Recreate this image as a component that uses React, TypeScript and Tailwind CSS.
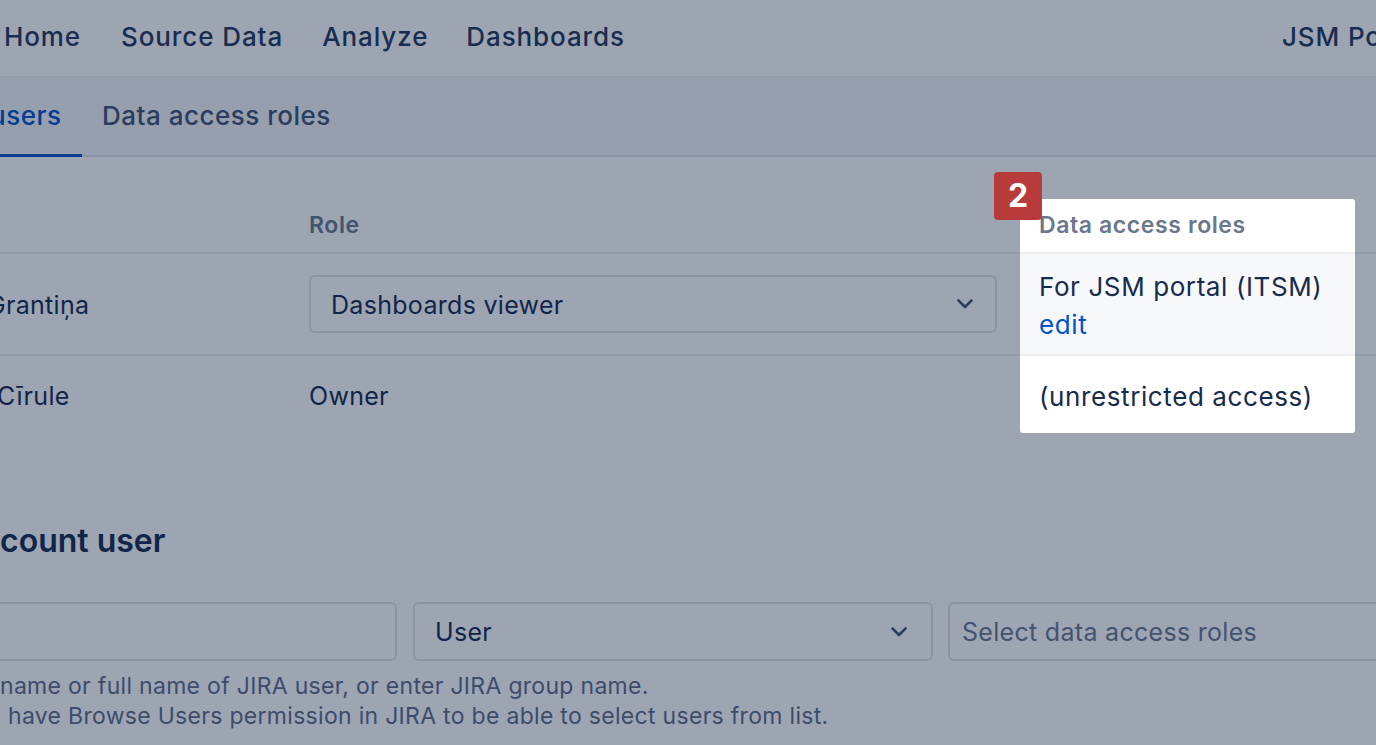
import { useState } from 'react';

interface Member {
  lastName: string;
  shift: string;
  role: string;
  editable: boolean;
  access: string;
  canEdit: boolean;
}

const Chevron = () => (
  <svg width="16" height="10" viewBox="0 0 16 10" fill="none">
    <polyline
      points="1.5,1.5 8,8 14.5,1.5"
      stroke="#42526e"
      strokeWidth="2.5"
      strokeLinecap="round"
      strokeLinejoin="round"
    />
  </svg>
);

const AccountUsersPage = () => {
  const [members] = useState<Member[]>([
    {
      lastName: 'Grantiņa',
      shift: '-ml-[13px]',
      role: 'Dashboards viewer',
      editable: true,
      access: 'For JSM portal (ITSM)',
      canEdit: true,
    },
    {
      lastName: 'Cīrule',
      shift: '-ml-[3px]',
      role: 'Owner',
      editable: false,
      access: '(unrestricted access)',
      canEdit: false,
    },
  ]);

  return (
    <div className="relative h-screen w-full overflow-hidden bg-white font-['Inter','Noto_Sans',sans-serif] text-[#172b4d] whitespace-nowrap">
      {/* top navigation */}
      <nav className="flex h-[76px] items-center pb-[4px] text-[26px] font-medium tracking-[0.9px] text-[#253858]">
        <span className="ml-[4px]">Home</span>
        <span className="ml-[40px]">Source Data</span>
        <span className="ml-[39px]">Analyze</span>
        <span className="ml-[38px]">Dashboards</span>
        <span className="ml-[657px] shrink-0">JSM Portal</span>
      </nav>

      {/* settings tabs */}
      <div className="flex h-[81px] items-stretch border-b-2 border-[#dfe1e6] bg-[#f4f5f7] text-[26px] font-medium tracking-[0.5px]">
        <div className="-mb-[2px] flex w-[82px] shrink-0 items-center border-b-[3px] border-[#0052cc] text-[#0052cc]">
          <span className="-ml-[10px]">users</span>
        </div>
        <div className="ml-[20px] flex items-center text-[#42526e]">Data access roles</div>
      </div>

      {/* members table */}
      <div className="mt-[42px]">
        <div className="flex h-[55px] text-[23px] font-semibold tracking-[0.6px] text-[#6b778c]">
          <div className="w-[289px] shrink-0 border-b-2 border-[#ebecf0]" />
          <div className="flex w-[731px] shrink-0 items-center border-b-2 border-[#ebecf0] pl-[20px]">Role</div>
          <div className="relative z-20 flex w-[335px] shrink-0 items-center rounded-t-[3px] border-b-2 border-[#ebecf0] bg-white px-[19px]">
            Data access roles
            <div className="absolute -left-[26px] -top-[27px] flex h-12 w-12 items-center justify-center rounded-[4px] bg-[#b93a3b] text-[32px] font-bold tracking-normal text-white">
              2
            </div>
          </div>
          <div className="flex-1 border-b-2 border-[#ebecf0]" />
        </div>

        {members.map((m, i) => {
          const last = i === members.length - 1;
          const line = last ? '' : 'border-b-2 border-[#ebecf0]';
          return (
            <div key={m.lastName} className={`flex text-[25px] tracking-[0.3px] ${last ? 'h-[77px]' : 'h-[102px]'}`}>
              <div className={`flex w-[289px] shrink-0 items-center pt-[4px] ${line}`}>
                <span className={m.shift}>{m.lastName}</span>
              </div>
              <div
                className={`flex w-[731px] shrink-0 items-center pl-[20px] pr-[23px] ${m.editable ? '' : 'pt-[4px]'} ${line}`}
              >
                {m.editable ? (
                  <div className="flex h-[58px] w-full items-center justify-between rounded-[6px] border-2 border-[#dfe1e6] pl-[20px] pr-[22px]">
                    <span className="pt-[3px]">{m.role}</span>
                    <Chevron />
                  </div>
                ) : (
                  <span>{m.role}</span>
                )}
              </div>
              <div
                className={`relative z-20 flex w-[335px] shrink-0 flex-col justify-center px-[19px] pt-[4px] text-[26px] tracking-[0.6px] ${line} ${
                  m.canEdit ? 'bg-[#f7f8fa] leading-[38px]' : 'rounded-b-[3px] bg-white'
                }`}
              >
                <span>{m.access}</span>
                {m.canEdit && <span className="text-[#0052cc]">edit</span>}
              </div>
              <div className={`flex-1 ${line}`} />
            </div>
          );
        })}
      </div>

      {/* add user form */}
      <h2 className="mt-[87px] h-[42px] text-[32px] font-semibold leading-[42px]">count user</h2>

      <div className="mt-[40px] flex h-[59px] text-[25px] tracking-[0.3px]">
        <div className="-ml-[23px] w-[420px] shrink-0 rounded-[6px] border-2 border-[#dfe1e6]" />
        <div className="ml-[16px] flex w-[520px] shrink-0 items-center justify-between rounded-[6px] border-2 border-[#dfe1e6] pl-[20px] pr-[24px]">
          <span className="pt-[3px]">User</span>
          <Chevron />
        </div>
        <div className="ml-[15px] flex w-[500px] shrink-0 items-center rounded-[6px] border-2 border-[#dfe1e6] pl-[12px] pt-[3px] text-[#6b778c]">
          Select data access roles
        </div>
      </div>

      <div className="mt-[10px] text-[23px] leading-[30px] tracking-[0.3px] text-[#5e6c84]">
        <p>name or full name of JIRA user, or enter JIRA group name.</p>
        <p className="pl-[8px]">have Browse Users permission in JIRA to be able to select users from list.</p>
      </div>

      {/* dimmed backdrop, highlighted column sits above it */}
      <div className="pointer-events-none absolute inset-0 z-10 bg-[#091e42]/40" />
    </div>
  );
};

export default AccountUsersPage;
